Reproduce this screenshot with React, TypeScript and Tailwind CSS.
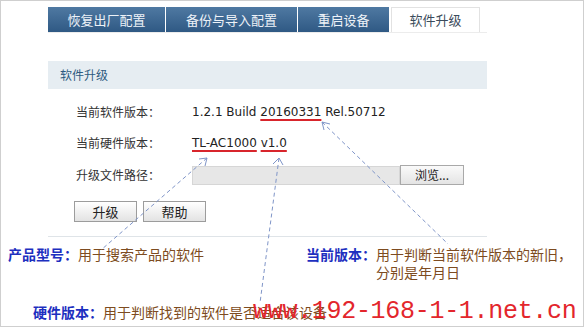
import React from 'react';

const cjk = { fontFamily: '"Noto Sans CJK SC", "Liberation Sans", sans-serif' };
const latin = { fontFamily: '"DejaVu Sans", "Noto Sans CJK SC", sans-serif' };

const tabs = [
  { label: '恢复出厂配置', w: 'w-[117px]' },
  { label: '备份与导入配置', w: 'w-[131px]' },
  { label: '重启设备', w: 'w-[91px]' },
];

const Row = ({ label, children }: { label: string; children: React.ReactNode }) => (
  <div className="flex h-[20px] items-center">
    <div className="w-[144px] shrink-0 pl-[28px] text-[12px] text-[#333]" style={cjk}>{label}</div>
    {children}
  </div>
);

const Arrows = () => (
  <svg className="pointer-events-none absolute inset-0" width="584" height="327">
    <g stroke="#7f95c8" strokeWidth="1" fill="none">
      <line x1="206" y1="157" x2="100" y2="249" strokeDasharray="4 3" />
      <polyline points="198,158 206,157 204,165" />
      <line x1="278" y1="157" x2="259" y2="302" strokeDasharray="4 3" />
      <polyline points="272,163 278,157 282,164" />
      <line x1="321" y1="121" x2="447" y2="243" strokeDasharray="4 3" />
      <polyline points="323,129 321,121 329,123" />
    </g>
  </svg>
);

export default function App() {
  return (
    <div className="relative h-[327px] w-[584px] overflow-hidden border border-[#cfcfcf] bg-white">
      <div className="ml-[47px] w-[439px] pt-[6px]">
        {/* tabs */}
        <div className="flex h-[26px] gap-[1px] border-b border-[#ececec]">
          {tabs.map(t => (
            <div
              key={t.label}
              className={`${t.w} flex items-center justify-center bg-linear-to-b from-[#4f79a2] to-[#2f5984] text-[13px] text-[#edf2f8]`}
              style={cjk}
            >
              {t.label}
            </div>
          ))}
          <div
            className="ml-[1px] flex w-[89px] items-center justify-center border-x border-t border-[#e2e2e2] bg-white text-[13px] text-[#3b4b5b]"
            style={cjk}
          >
            软件升级
          </div>
        </div>

        <div className="mt-[28px] flex h-[28px] items-center bg-[#e6edf2] pl-[12px] text-[12px] text-[#2e5b80]" style={cjk}>
          软件升级
        </div>

        <div className="mt-[13px] flex flex-col gap-[11px]">
          <Row label="当前软件版本：">
            <span className="text-[12px] text-[#222]" style={latin}>
              1.2.1 Build{' '}
              <span className="underline decoration-[#d8252c] decoration-2 underline-offset-[3px]">20160331</span>{' '}
              Rel.50712
            </span>
          </Row>
          <Row label="当前硬件版本：">
            <span className="text-[12px] text-[#222]" style={latin}>
              <span className="underline decoration-[#d8252c] decoration-2 underline-offset-[3px]">TL-AC1000</span>{' '}
              <span className="underline decoration-[#d8252c] decoration-2 underline-offset-[3px]">v1.0</span>
            </span>
          </Row>
          <div className="mt-[1px]">
            <Row label="升级文件路径：">
              <div className="h-[19px] w-[208px] border border-[#d6d6d6] bg-[#e7e7e7]" />
              <div
                className="flex h-[20px] w-[64px] items-center justify-center border border-[#a9a9a9] bg-linear-to-b from-[#fafafa] to-[#e4e4e4] text-[12px] text-[#222]"
                style={cjk}
              >
                浏览...
              </div>
            </Row>
          </div>
        </div>

        <div className="mt-[16px] flex gap-[6px] pl-[26px]">
          {['升级', '帮助'].map(b => (
            <div
              key={b}
              className="flex h-[21px] w-[63px] items-center justify-center border border-[#9c9c9c] bg-linear-to-b from-[#ffffff] to-[#e3e3e3] text-[13px] text-[#222]"
              style={cjk}
            >
              {b}
            </div>
          ))}
        </div>

        <div className="mt-[14px] border-t border-[#dfe4e8]" />
      </div>

      {/* annotations */}
      <div className="mt-[8px] flex text-[14px] leading-[18px]" style={cjk}>
        <div className="w-[305px] pl-[7px]">
          <span className="font-bold text-[#1d2fbf]">产品型号：</span>
          <span className="text-[#7d4b20]">用于搜索产品的软件</span>
        </div>
        <div className="flex">
          <span className="font-bold text-[#1d2fbf]">当前版本：</span>
          <div className="flex flex-col text-[#7d4b20]">
            <span>用于判断当前软件版本的新旧，</span>
            <span>分别是年月日</span>
          </div>
        </div>
      </div>
      <div className="mt-[22px] pl-[32px] text-[14px] leading-[18px]" style={cjk}>
        <span className="font-bold text-[#1d2fbf]">硬件版本：</span>
        <span className="text-[#7d4b20]">用于判断找到的软件是否适合该设备</span>
      </div>

      <Arrows />

      <div
        className="absolute left-[252px] top-[296px] text-[25px] leading-[30px] tracking-[-0.3px] text-[#e3262c]"
        style={{ fontFamily: '"Liberation Mono", monospace' }}
      >
        www.192-168-1-1.net.cn
      </div>
    </div>
  );
}
